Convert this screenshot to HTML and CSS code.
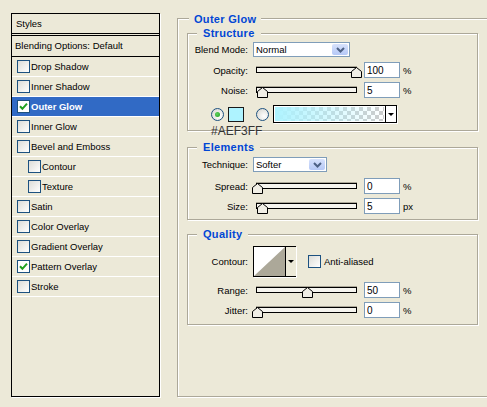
FILE: index.html
```html
<!DOCTYPE html>
<html lang="en">
<head>
    <meta charset="UTF-8">
    <meta name="viewport" content="width=device-width, initial-scale=1.0">
    <title>Layer Style - Outer Glow</title>
    <link rel="stylesheet" href="styles.css">
</head>
<body>
    <div class="dialog">
        <div class="style-list">
            <div class="list-head">Styles</div>
            <div class="list-blend">Blending Options: Default</div>
            <div class="list-item"><span class="check"></span>Drop Shadow</div>
            <div class="list-item"><span class="check"></span>Inner Shadow</div>
            <div class="list-item active"><span class="check checked"><svg width="9" height="9" viewBox="0 0 9 9"><path d="M1 4.2 L3.4 6.8 L8 1.6" fill="none" stroke="#21A121" stroke-width="2"/></svg></span>Outer Glow</div>
            <div class="list-item"><span class="check"></span>Inner Glow</div>
            <div class="list-item"><span class="check"></span>Bevel and Emboss</div>
            <div class="list-item sub"><span class="check"></span>Contour</div>
            <div class="list-item sub"><span class="check"></span>Texture</div>
            <div class="list-item"><span class="check"></span>Satin</div>
            <div class="list-item"><span class="check"></span>Color Overlay</div>
            <div class="list-item"><span class="check"></span>Gradient Overlay</div>
            <div class="list-item"><span class="check checked"><svg width="9" height="9" viewBox="0 0 9 9"><path d="M1 4.2 L3.4 6.8 L8 1.6" fill="none" stroke="#21A121" stroke-width="2"/></svg></span>Pattern Overlay</div>
            <div class="list-item"><span class="check"></span>Stroke</div>
        </div>

        <div class="group outer">
            <div class="legend">Outer Glow</div>

            <!-- Structure -->
            <div class="group inner structure">
                <div class="legend">Structure</div>
                <div class="row r-select">
                    <span class="lbl">Blend Mode:</span>
                    <div class="select wide"><span>Normal</span><span class="drop"><svg width="9" height="6" viewBox="0 0 9 6"><path d="M1 1 L4.5 4.5 L8 1" fill="none" stroke="#4D6185" stroke-width="2"/></svg></span></div>
                </div>
                <div class="row r-slider first">
                    <span class="lbl">Opacity:</span>
                    <div class="slider"><svg class="thumb" style="left: 100%" width="11" height="11" viewBox="0 0 11 11"><polygon points="0.5,10.5 0.5,4.5 5.5,0.5 10.5,4.5 10.5,10.5" fill="#F1EFE6" stroke="#000"/></svg></div>
                    <input class="num" type="text" value="100" readonly>
                    <span class="unit">%</span>
                </div>
                <div class="row r-slider">
                    <span class="lbl">Noise:</span>
                    <div class="slider"><svg class="thumb" style="left: 5%" width="11" height="11" viewBox="0 0 11 11"><polygon points="0.5,10.5 0.5,4.5 5.5,0.5 10.5,4.5 10.5,10.5" fill="#F1EFE6" stroke="#000"/></svg></div>
                    <input class="num" type="text" value="5" readonly>
                    <span class="unit">%</span>
                </div>
                <div class="row r-color">
                    <span class="radio on"></span>
                    <span class="swatch"></span>
                    <span class="radio radio-2"></span>
                    <div class="gradient">
                        <span class="grad-fill"></span>
                        <span class="grad-arrow"><span class="tri"></span></span>
                    </div>
                </div>
                <div class="hex-note">#AEF3FF</div>
            </div>

            <!-- Elements -->
            <div class="group inner elements">
                <div class="legend">Elements</div>
                <div class="row r-select">
                    <span class="lbl">Technique:</span>
                    <div class="select short"><span>Softer</span><span class="drop"><svg width="9" height="6" viewBox="0 0 9 6"><path d="M1 1 L4.5 4.5 L8 1" fill="none" stroke="#4D6185" stroke-width="2"/></svg></span></div>
                </div>
                <div class="row r-slider first">
                    <span class="lbl">Spread:</span>
                    <div class="slider"><svg class="thumb" style="left: 0%" width="11" height="11" viewBox="0 0 11 11"><polygon points="0.5,10.5 0.5,4.5 5.5,0.5 10.5,4.5 10.5,10.5" fill="#F1EFE6" stroke="#000"/></svg></div>
                    <input class="num" type="text" value="0" readonly>
                    <span class="unit">%</span>
                </div>
                <div class="row r-slider">
                    <span class="lbl">Size:</span>
                    <div class="slider"><svg class="thumb" style="left: 5%" width="11" height="11" viewBox="0 0 11 11"><polygon points="0.5,10.5 0.5,4.5 5.5,0.5 10.5,4.5 10.5,10.5" fill="#F1EFE6" stroke="#000"/></svg></div>
                    <input class="num" type="text" value="5" readonly>
                    <span class="unit">px</span>
                </div>
            </div>

            <!-- Quality -->
            <div class="group inner quality">
                <div class="legend">Quality</div>
                <div class="row r-contour">
                    <span class="lbl">Contour:</span>
                    <div class="contour">
                        <svg class="contour-preview" width="31" height="29" viewBox="0 0 31 29"><polygon points="0,29 31,0 31,29" fill="#ACA899"/></svg>
                        <span class="contour-arrow"><span class="tri"></span></span>
                    </div>
                    <span class="check aa"></span>
                    <span>Anti-aliased</span>
                </div>
                <div class="row r-slider first">
                    <span class="lbl">Range:</span>
                    <div class="slider"><svg class="thumb" style="left: 50%" width="11" height="11" viewBox="0 0 11 11"><polygon points="0.5,10.5 0.5,4.5 5.5,0.5 10.5,4.5 10.5,10.5" fill="#F1EFE6" stroke="#000"/></svg></div>
                    <input class="num" type="text" value="50" readonly>
                    <span class="unit">%</span>
                </div>
                <div class="row r-slider">
                    <span class="lbl">Jitter:</span>
                    <div class="slider"><svg class="thumb" style="left: 0%" width="11" height="11" viewBox="0 0 11 11"><polygon points="0.5,10.5 0.5,4.5 5.5,0.5 10.5,4.5 10.5,10.5" fill="#F1EFE6" stroke="#000"/></svg></div>
                    <input class="num" type="text" value="0" readonly>
                    <span class="unit">%</span>
                </div>
            </div>
        </div>
    </div>
</body>
</html>
```

FILE: styles.css
```css
body {
    margin: 0;
    width: 487px;
    height: 407px;
    overflow: hidden;
    background-color: #ECE9D8;
    font-family: "Liberation Sans", Arial, sans-serif;
    font-size: 9.5px;
    color: #000;
}

.dialog {
    display: flex;
    align-items: flex-start;
    padding: 13px 0 0 11px;
}

/* left style list */
.style-list {
    flex: none;
    width: 149px;
    height: 384px;
    box-sizing: border-box;
    border: 1px solid #000;
    box-shadow: 1px 1px 0 #fff;
}

.list-head {
    height: 19px;
    line-height: 19px;
    padding-left: 4px;
    border-bottom: 3px double #000;
}

.list-blend {
    height: 20px;
    line-height: 20px;
    padding-left: 3px;
    border-bottom: 1px solid #000;
}

.list-item {
    display: flex;
    align-items: center;
    height: 19px;
    padding-left: 5px;
    border-bottom: 1px solid #fff;
}

.list-item.sub {
    padding-left: 16px;
}

.list-item.active {
    background-color: #316AC5;
    color: #fff;
    font-weight: bold;
}

.check {
    flex: none;
    display: flex;
    align-items: center;
    justify-content: center;
    width: 13px;
    height: 13px;
    box-sizing: border-box;
    margin-right: 1px;
    border: 1px solid #1C5180;
    background: linear-gradient(135deg, #DCDCD7, #fff);
}

.check.checked {
    background: #fff;
}

/* group boxes */
.group {
    box-sizing: border-box;
    border: 1px solid #ACA899;
    box-shadow: inset 1px 1px 0 #fff, 1px 1px 0 #fff;
}

.legend {
    width: max-content;
    background-color: #ECE9D8;
    color: #0046D5;
    font-size: 11px;
    font-weight: bold;
    line-height: 14px;
    letter-spacing: 0.3px;
}

.outer {
    flex: none;
    width: 330px;
    height: 379px;
    margin: 5px 0 0 17px;
}

.outer > .legend {
    margin: -7px 0 0 11px;
    padding: 0 5px;
}

.inner {
    position: relative;
    width: 291px;
    margin-left: 9px;
}

.inner > .legend {
    margin: -8px 0 0 9px;
    padding: 0 6px;
}

.structure {
    margin-top: 7px;
    padding-bottom: 7px;
}

.elements {
    margin-top: 16px;
    padding-bottom: 5px;
}

.quality {
    margin-top: 14px;
    padding-bottom: 6px;
}

/* rows */
.row {
    display: flex;
    align-items: center;
}

.lbl {
    flex: none;
    width: 60px;
    text-align: right;
}

.r-select {
    height: 15px;
    margin-top: 2px;
}

.elements .r-select {
    margin-top: 3px;
}

.r-slider {
    height: 16px;
    margin-top: 4px;
}

.r-slider.first {
    margin-top: 5px;
}

.elements .r-slider.first {
    margin-top: 6px;
}

.r-color {
    height: 18px;
    margin-top: 7px;
}

.r-contour {
    height: 31px;
    margin-top: 5px;
}

/* controls */
.select {
    flex: none;
    display: flex;
    align-items: center;
    justify-content: space-between;
    height: 15px;
    box-sizing: border-box;
    margin-left: 5px;
    padding: 1px 1px 1px 2px;
    border: 1px solid #7F9DB9;
    background-color: #fff;
}

.select.wide {
    width: 97px;
}

.select.short {
    width: 74px;
}

.drop {
    display: flex;
    align-items: center;
    justify-content: center;
    width: 16px;
    height: 100%;
    border-radius: 2px;
    background: linear-gradient(#D7E2FC, #B5C8F6);
}

.slider {
    position: relative;
    flex: none;
    width: 101px;
    height: 6px;
    box-sizing: border-box;
    margin-left: 8px;
    border: 1px solid #000;
    background-color: #F5F4EE;
    box-shadow: 0 -1px 0 #ACA899;
}

.thumb {
    position: absolute;
    top: -1px;
    margin-left: -5px;
}

.num {
    flex: none;
    width: 36px;
    height: 16px;
    box-sizing: border-box;
    margin: 0 0 0 7px;
    padding: 1px 0 0 2px;
    border: 1px solid #7F9DB9;
    background-color: #fff;
    font-family: inherit;
    font-size: 10px;
    color: #000;
    outline: none;
}

.unit {
    margin-left: 3px;
}

.radio {
    flex: none;
    display: flex;
    align-items: center;
    justify-content: center;
    width: 13px;
    height: 13px;
    box-sizing: border-box;
    margin-left: 23px;
    border: 1px solid #1C5180;
    border-radius: 50%;
    background: radial-gradient(circle at 65% 65%, #fff, #D4D3CC);
}

.radio.on::after {
    content: "";
    width: 5px;
    height: 5px;
    border-radius: 50%;
    background: radial-gradient(circle at 40% 40%, #5FD35F, #1E9A1E);
}

.radio-2 {
    margin-left: 12px;
}

.swatch {
    flex: none;
    width: 16px;
    height: 15px;
    box-sizing: border-box;
    margin-left: 4px;
    border: 1px solid #1A1A1A;
    background-color: #AEF3FF;
}

.gradient {
    flex: none;
    display: flex;
    width: 124px;
    height: 18px;
    box-sizing: border-box;
    margin-left: 4px;
    border: 1px solid #000;
    box-shadow: 1px 1px 0 #fff;
}

.grad-fill {
    flex: 1;
    border: 1px solid #fff;
    background:
        linear-gradient(to right, #AEF3FF, rgba(174, 243, 255, 0)),
        conic-gradient(#CCCCCC 25%, #fff 0 50%, #CCCCCC 0 75%, #fff 0);
    background-size: auto, 8px 8px;
}

.grad-arrow,
.contour-arrow {
    flex: none;
    display: flex;
    align-items: center;
    justify-content: center;
    width: 10px;
    border-left: 1px solid #000;
    background-color: #fff;
}

.contour-arrow {
    background-color: #ECE9D8;
}

.tri {
    width: 0;
    height: 0;
    border-left: 3px solid transparent;
    border-right: 3px solid transparent;
    border-top: 3px solid #000;
}

.hex-note {
    position: absolute;
    left: 23px;
    top: 91px;
    font-size: 12px;
    line-height: 12px;
    color: #333;
}

.contour {
    flex: none;
    display: flex;
    width: 43px;
    height: 31px;
    box-sizing: border-box;
    margin-left: 5px;
    border: 1px solid #000;
    background-color: #fff;
    box-shadow: 1px 1px 0 #fff;
}

.contour-preview {
    display: block;
    flex: none;
}

.check.aa {
    margin: 0 3px 0 12px;
}
```
